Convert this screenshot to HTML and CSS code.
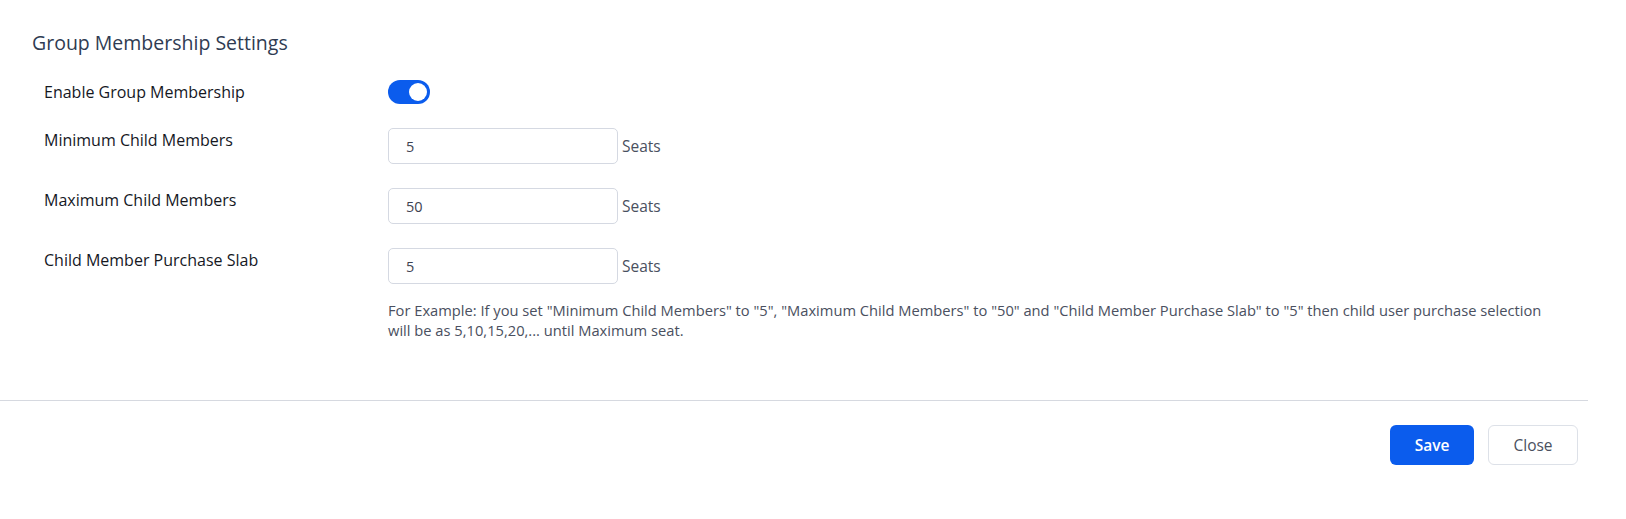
FILE: index.html
```html
<!DOCTYPE html>
<html lang="en">
<head>
  <meta charset="UTF-8">
  <meta name="viewport" content="width=device-width, initial-scale=1.0">
  <title>Group Membership Settings</title>
  <link rel="stylesheet" href="styles.css">
</head>
<body>
  <div class="settings-card">
    <div class="settings-body">
      <h2 class="settings-title">Group Membership Settings</h2>

      <div class="form-grid">
        <label class="form-label" for="enableGroup">Enable Group Membership</label>
        <div class="form-control">
          <label class="switch">
            <input type="checkbox" id="enableGroup" checked>
            <span class="slider"></span>
          </label>
        </div>

        <label class="form-label" for="minChild">Minimum Child Members</label>
        <div class="form-control">
          <input type="text" id="minChild" class="text-input" value="5">
          <span class="unit">Seats</span>
        </div>

        <label class="form-label" for="maxChild">Maximum Child Members</label>
        <div class="form-control">
          <input type="text" id="maxChild" class="text-input" value="50">
          <span class="unit">Seats</span>
        </div>

        <label class="form-label" for="slab">Child Member Purchase Slab</label>
        <div class="form-control">
          <input type="text" id="slab" class="text-input" value="5">
          <span class="unit">Seats</span>
        </div>

        <div></div>
        <p class="help-text">
          For Example: If you set "Minimum Child Members" to "5", "Maximum Child Members" to "50" and "Child Member Purchase Slab" to "5" then child user purchase selection will be as 5,10,15,20,... until Maximum seat.
        </p>
      </div>
    </div>

    <div class="settings-footer">
      <button class="btn btn-primary">Save</button>
      <button class="btn btn-light">Close</button>
    </div>
  </div>
</body>
</html>
```

FILE: styles.css
```css
body {
  font-family: 'Open Sans', 'Noto Sans', sans-serif;
  background-color: #fff;
  margin: 0;
  color: #15181f;
}
.settings-card {
  width: 1588px;
}
.settings-body {
  padding: 29px 32px 60px;
  border-bottom: 1px solid #d6d9e0;
}
.settings-title {
  margin: 0 0 24px;
  font-size: 19.5px;
  line-height: 27px;
  font-weight: 400;
  color: #2f3b52;
}
.form-grid {
  display: grid;
  grid-template-columns: 344px 1fr;
  row-gap: 24px;
  padding-left: 12px;
}
.form-label {
  font-size: 16px;
  line-height: 24px;
  font-weight: 500;
  color: #15181f;
}
.form-control {
  display: flex;
  align-items: center;
}
.text-input {
  width: 230px;
  height: 36px;
  box-sizing: border-box;
  padding: 0 17px;
  border: 1px solid #d5d9e2;
  border-radius: 5px;
  font-family: inherit;
  font-size: 14.5px;
  color: #3d4250;
}
.text-input:focus {
  outline: none;
  border-color: #0b5ced;
}
.unit {
  margin-left: 4px;
  font-size: 15.5px;
  color: #4a5060;
}
.switch {
  position: relative;
  display: inline-block;
  width: 42px;
  height: 24px;
}
.switch input {
  opacity: 0;
  width: 0;
  height: 0;
}
.slider {
  position: absolute;
  inset: 0;
  background-color: #c9ced8;
  border-radius: 12px;
  cursor: pointer;
}
.slider::before {
  content: "";
  position: absolute;
  width: 18px;
  height: 18px;
  left: 3px;
  top: 3px;
  background-color: #fff;
  border-radius: 50%;
  transition: transform 0.2s ease;
}
.switch input:checked + .slider {
  background-color: #0b5ced;
}
.switch input:checked + .slider::before {
  transform: translateX(18px);
}
.help-text {
  margin: -8px 0 0;
  max-width: 1165px;
  font-size: 14.7px;
  line-height: 20px;
  color: #4a5060;
}
.settings-footer {
  display: flex;
  justify-content: flex-end;
  gap: 14px;
  padding: 24px 10px 53px;
}
.btn {
  height: 40px;
  border-radius: 6px;
  font-family: inherit;
  font-size: 15.5px;
  cursor: pointer;
}
.btn-primary {
  width: 84px;
  background-color: #0b5ced;
  border: none;
  color: #fff;
  font-weight: 600;
}
.btn-light {
  width: 90px;
  background-color: #fff;
  border: 1px solid #dde1e8;
  color: #4a5060;
}
```
